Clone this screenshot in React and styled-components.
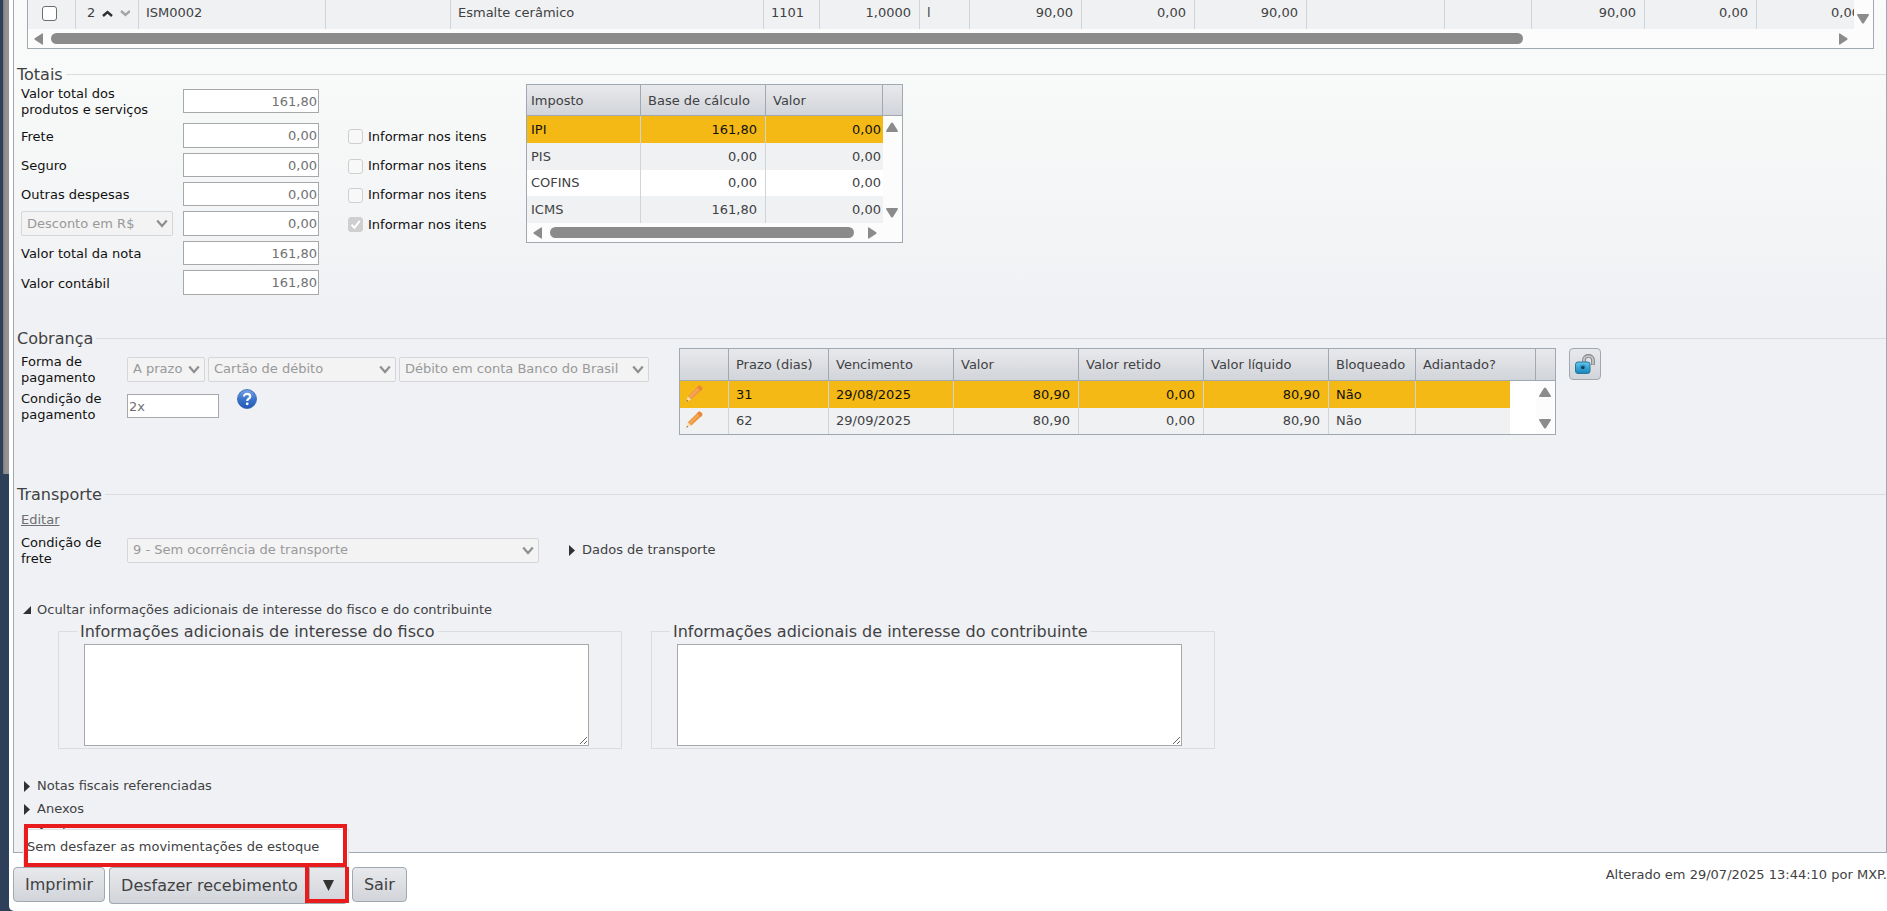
import React from "react";
import styled, { createGlobalStyle, css } from "styled-components";

const GlobalStyle = createGlobalStyle`
  *, *::before, *::after { box-sizing: border-box; }
  body {
    margin: 0;
    background: #fff;
    color: #3f4143;
    font: 13px/16px Verdana, "DejaVu Sans", sans-serif;
  }
  input, select, textarea, button { font: inherit; color: inherit; }
`;

const line = "#a0a8b2";
const cellLine = "#d0d4d9";
const headerFill = "linear-gradient(#e8e9ec, #d1d4d9)";

const Page = styled.div`
  display: flex;
  min-height: 100vh;
  background: #2e4059;
`;

const Backdrop = styled.div`
  flex: none;
  width: 9px;
  padding-left: 3px;
`;

const BackdropShade = styled.div`
  height: 52vh;
  background: linear-gradient(90deg, #77797c, #929292 40%);
`;

const Dialog = styled.main`
  flex: 1;
  min-width: 0;
  padding-left: 4px;
  background: #fff;
  border-bottom-left-radius: 5px;
`;

const Panel = styled.div`
  border: solid ${line};
  border-width: 0 1px 1px;
  background: linear-gradient(#f9fbfa, #f8faf9 80px, #f0f1f4 310px);
`;

const GridFrame = styled.div`
  flex: none;
  width: ${(p) => (p.$width ? `${p.$width}px` : "auto")};
  margin: ${(p) => p.$margin || 0};
  border: 1px solid ${line};
  border-top-width: ${(p) => (p.$cut ? 0 : 1)}px;
  background: #fcfcfc;
`;

const GridBody = styled.div`
  display: flex;
`;

const GridViewport = styled.div`
  flex: 1;
  min-width: 0;
  overflow: hidden;
`;

const Table = styled.table`
  width: ${(p) => (p.$width ? `${p.$width}px` : "100%")};
  table-layout: fixed;
  border-collapse: separate;
  border-spacing: 0;
`;

const Th = styled.th`
  height: ${(p) => p.$height || 31}px;
  padding: 1px 0 0 ${(p) => p.$pad ?? 7}px;
  border: solid ${line};
  border-width: 0 1px 1px 0;
  background: ${headerFill};
  font-weight: 400;
  text-align: left;
  white-space: nowrap;
  &:last-child { border-right: 0; }
`;

const Td = styled.td`
  height: ${(p) => p.$height || 27}px;
  padding: 0 8px 0 ${(p) => p.$pad ?? 7}px;
  border-right: ${(p) => (p.$last ? "0" : `1px solid ${cellLine}`)};
  text-align: ${(p) => (p.$num ? "right" : "left")};
  white-space: nowrap;
  ${(p) => p.$tight && css`padding-right: 2px;`}
  ${(p) => p.$raised && css`padding-bottom: 3px;`}
`;

const Tr = styled.tr`
  background: ${(p) => (p.$selected ? "#f5b915" : p.$plain ? "#fff" : "#f0f1f3")};
  color: ${(p) => (p.$selected ? "#111" : "inherit")};
`;

const FillerCell = styled.td`
  padding: 0;
  background: #fff;
`;

const ScrollCell = styled.td`
  height: 1px;
  padding: 0;
  background: #fcfcfc;
`;

const VScroll = styled.div`
  display: flex;
  flex-direction: column;
  justify-content: ${(p) => (p.$end ? "flex-end" : "space-between")};
  align-items: center;
  width: 19px;
  height: ${(p) => (p.$end ? "auto" : "100%")};
  padding: 6px 1px 5px 0;
`;

const HScroll = styled.div`
  display: flex;
  align-items: center;
  gap: 8px;
  height: 19px;
  padding: 0 25px 0 6px;
`;

const Track = styled.div`
  flex: 1;
  height: 11px;
  padding-right: ${(p) => p.$rest};
`;

const Thumb = styled.div`
  height: 11px;
  border-radius: 6px;
  background: #8b8b8b;
`;

const OrderCell = styled.div`
  display: flex;
  align-items: center;
  gap: 7px;
  padding-left: 4px;
`;

const CheckBox = styled.input.attrs({ type: "checkbox" })`
  appearance: none;
  display: block;
  flex: none;
  width: 15px;
  height: 15px;
  margin: 0;
  border: 1px solid #6d6d6d;
  border-radius: 3px;
  background: #fff;
  &:disabled { border-color: #cfcfcf; background: #f8f8f8; }
  &:disabled:checked {
    border-color: #cfcfcf;
    background: #cfcfcf;
  }
`;

const CheckWrap = styled.span`
  display: grid;
  > * { grid-area: 1 / 1; }
`;

const CheckLabel = styled.label`
  display: flex;
  align-items: center;
  gap: 5px;
  margin-left: 29px;
  padding-top: 2px;
  color: #111;
`;

const Section = styled.fieldset`
  min-width: 0;
  margin: ${(p) => p.$top}px 0 0;
  padding: 0;
  border: 0;
  border-top: 1px solid #dadcde;
`;

const Legend = styled.legend`
  padding: 0 3px;
  font-size: 16px;
  line-height: 19px;
`;

const Columns = styled.div`
  display: flex;
  align-items: ${(p) => (p.$center ? "center" : "flex-start")};
`;

const Fields = styled.div`
  display: flex;
  flex-direction: column;
  flex: none;
  gap: ${(p) => p.$gap || 5}px;
  width: ${(p) => p.$width}px;
  padding: ${(p) => p.$top}px 0 0 7px;
`;

const FieldRow = styled.div`
  display: flex;
  align-items: center;
`;

const FieldLabel = styled.label`
  flex: none;
  width: ${(p) => p.$width}px;
  padding: 2px 20px 0 0;
  color: #111;
`;

const SelectSlot = styled.div`
  flex: none;
  width: 162px;
`;

const TextInput = styled.input`
  flex: none;
  width: ${(p) => p.$width}px;
  height: ${(p) => (p.$tall ? 25 : 24)}px;
  padding: 0 1px;
  border: 1px solid #a6a8aa;
  border-radius: 0;
  background: #fff;
  color: #6f7173;
  text-align: ${(p) => (p.$num ? "right" : "left")};
`;

const SelectBox = styled.span`
  display: grid;
  flex: none;
  align-items: center;
  width: ${(p) => p.$width}px;
  > * { grid-area: 1 / 1; }
  > svg { justify-self: end; margin-right: 5px; pointer-events: none; }
`;

const Select = styled.select`
  appearance: none;
  width: 100%;
  height: 25px;
  padding: 0 0 0 5px;
  border: 1px solid #d5d6d7;
  border-radius: 2px;
  background: #f3f3f3;
  color: #98999a;
  opacity: 1;
`;

const SelectGroup = styled.div`
  display: flex;
  gap: 3px;
`;

const HelpButton = styled.button`
  align-self: flex-start;
  width: 20px;
  height: 20px;
  margin-left: 18px;
  padding: 0;
  border: 0;
  background: none;
  svg { display: block; }
`;

const PencilButton = styled.button`
  display: block;
  padding: 0;
  border: 0;
  background: none;
  svg { display: block; }
`;

const IconButton = styled.button`
  display: grid;
  place-items: center;
  flex: none;
  width: 32px;
  height: 32px;
  margin-left: 13px;
  padding: 0;
  border: 1px solid ${line};
  border-radius: 4px;
  background: ${headerFill};
`;

const EditLink = styled.a`
  display: block;
  width: max-content;
  margin: 8px 0 5px 7px;
  color: #6c6e70;
  text-decoration: underline;
`;

const Toggle = styled.button`
  display: flex;
  align-items: center;
  gap: ${(p) => (p.$open ? 6 : 7)}px;
  margin: 0;
  padding: 0;
  border: 0;
  background: none;
  text-align: left;
`;

const Extras = styled.div`
  padding: 35px 0 0 9px;
`;

const Notes = styled.div`
  display: flex;
  gap: 29px;
  margin: 4px 0 0 35px;
`;

const NoteSet = styled.fieldset`
  width: 564px;
  min-width: 0;
  margin: 0;
  padding: 3px 0 2px 25px;
  border: 1px solid #dadcde;
  legend { margin-left: -7px; }
`;

const NoteArea = styled.textarea`
  display: block;
  width: 505px;
  height: 102px;
  padding: 2px;
  border: 1px solid #a6a8aa;
  background: #fff;
`;

const ToggleList = styled.div`
  display: flex;
  flex-direction: column;
  align-items: flex-start;
  gap: 7px;
  padding: 29px 0 12px 10px;
`;

const Footer = styled.footer`
  position: relative;
  display: flex;
  align-items: flex-start;
  gap: 4px;
  padding-top: 14px;
`;

const Button = styled.button`
  height: ${(p) => (p.$tall ? 37 : 35)}px;
  padding: 0 11px;
  border: 1px solid ${line};
  border-radius: 4px;
  background: ${headerFill};
  font-size: 16px;
`;

const SplitButton = styled.div`
  display: flex;
  ${Button}:first-child { border-radius: 4px 0 0 4px; border-right: 0; }
  ${Button}:last-child { border-radius: 0 4px 4px 0; }
`;

const ArrowButton = styled(Button)`
  position: relative;
  width: 39px;
  padding: 0;
  &::after {
    content: "";
    position: absolute;
    inset: -5px -2px 0 -5px;
    border: 4px solid #e81c1c;
  }
  svg { display: block; margin: 0 auto; }
`;

const Menu = styled.div`
  position: absolute;
  left: 10px;
  bottom: 100%;
  width: 326px;
  margin-bottom: -14px;
  border: 1px solid #e2e3e5;
  background: #fff;
  &::after {
    content: "";
    position: absolute;
    inset: -6px 1px -1px 0;
    border: 4px solid #e81c1c;
    pointer-events: none;
  }
`;

const MenuItem = styled.button`
  display: block;
  height: 36px;
  padding: 0 3px 2px;
  border: 0;
  background: none;
`;

const Changed = styled.p`
  margin: 0 0 0 auto;
`;

const arrows = {
  left: "M9 1v10q0 1-1 .5L.8 6.8Q0 6 .8 5.200L8 .5Q9 0 9 1Z",
  right: "M0 1v10q0 1 1 .5l7.200-4.700Q9 6 8.200 5.200L1 .5Q0 0 0 1Z",
  up: "M1 10h10q1.500 0 .7-1.500L7 1Q6 0 5 1L.3 8.500Q-.5 10 1 10Z",
  down: "M1 0h10q1.500 0 .7 1.500L7 9Q6 10 5 9L.3 1.500Q-.5 0 1 0Z",
};

function ScrollArrow({ dir }) {
  const across = dir === "left" || dir === "right";
  return (
    <svg width={across ? 9 : 12} height={across ? 12 : 10} fill="#8b8b8b" aria-hidden="true">
      <path d={arrows[dir]} />
    </svg>
  );
}

function HorizontalScroll({ rest }) {
  return (
    <HScroll>
      <ScrollArrow dir="left" />
      <Track $rest={rest}><Thumb /></Track>
      <ScrollArrow dir="right" />
    </HScroll>
  );
}

function Caret({ up }) {
  return (
    <svg width="11" height="7" fill="none" stroke={up ? "#2d2f31" : "#a3a5a7"} strokeWidth="2.4" aria-hidden="true">
      <path d={up ? "M1 6 5.500 2 10 6" : "M1 1 5.500 5 10 1"} />
    </svg>
  );
}

function Chevron() {
  return (
    <svg width="12" height="9" fill="none" stroke="#8d8f91" strokeWidth="2.200" aria-hidden="true">
      <path d="M1.200 1.500 6 7l4.800-5.500" />
    </svg>
  );
}

function ToggleMark({ open }) {
  return open ? (
    <svg width="8" height="8" fill="#2f3133" aria-hidden="true"><path d="M8 0v8H0Z" /></svg>
  ) : (
    <svg width="6" height="11" fill="#2f3133" aria-hidden="true"><path d="M0 0 6 5.500 0 11Z" /></svg>
  );
}

function HelpIcon() {
  return (
    <svg width="20" height="20" viewBox="0 0 20 20" aria-hidden="true">
      <defs>
        <linearGradient id="help" x1="0" y1="0" x2="0" y2="1">
          <stop offset="0" stopColor="#7ba6e4" />
          <stop offset=".5" stopColor="#3a74cc" />
          <stop offset="1" stopColor="#2258b4" />
        </linearGradient>
      </defs>
      <circle cx="10" cy="10" r="9.500" fill="url(#help)" stroke="#2f62b4" strokeWidth=".8" />
      <path d="M7 7.600C7 3.800 13.200 4 13.200 7.400c0 2.300-3 2.200-3 4.600" fill="none" stroke="#fff" strokeWidth="2.200" />
      <circle cx="10.200" cy="14.800" r="1.400" fill="#fff" />
    </svg>
  );
}

function PencilIcon() {
  return (
    <svg width="17" height="17" viewBox="0 0 17 17" aria-hidden="true">
      <path d="M1.800 11.200 5.400 14.600.4 16.600Z" fill="#f6dfb2" />
      <path d="M.4 16.600 1 14.900 2.200 16Z" fill="#4a4035" />
      <path d="M1.800 11.200 12 1.200q1.400-1.400 2.900 0l.8.8q1.400 1.400 0 2.900L5.400 14.600Z" fill="#ef9a42" />
      <path d="M3.400 12.600 13.600 2.600" stroke="#f5b062" strokeWidth="1.200" />
      <path d="M12 1.200q1.400-1.400 2.900 0l.8.8q1.400 1.400 0 2.900l-1 1-3.700-3.700Z" fill="#e8893a" />
    </svg>
  );
}

function UnlockIcon() {
  return (
    <svg width="20" height="20" viewBox="0 0 20 20" aria-hidden="true">
      <defs>
        <linearGradient id="lock" x1="0" y1="0" x2="0" y2="1">
          <stop offset="0" stopColor="#68c6ec" />
          <stop offset="1" stopColor="#1583b8" />
        </linearGradient>
      </defs>
      <path d="M9 9V6C9 .6 18 .6 18 6V11" fill="none" stroke="#858789" strokeWidth="3.800" />
      <path d="M9 9V6C9 .8 18 .8 18 6V10.500" fill="none" stroke="#c3c5c7" strokeWidth="1.800" />
      <rect x=".5" y="8" width="14.500" height="11.500" rx="2.500" fill="url(#lock)" stroke="#2478a0" />
      <circle cx="7.800" cy="13.600" r="3.200" fill="#2c98cc" />
      <circle cx="7.800" cy="13.600" r="1.700" fill="#0f3d5a" />
    </svg>
  );
}

function Picker({ id, label, width, value }) {
  return (
    <SelectBox $width={width}>
      <Select id={id} aria-label={label} disabled defaultValue={value}>
        <option>{value}</option>
      </Select>
      <Chevron />
    </SelectBox>
  );
}

function InItems({ checked, name }) {
  return (
    <CheckLabel>
      <CheckWrap>
        <CheckBox name={name} disabled defaultChecked={checked} />
        {checked && (
          <svg width="15" height="15" fill="none" stroke="#fff" strokeWidth="2" aria-hidden="true">
            <path d="m3.500 7.800 3 3 5.200-7" />
          </svg>
        )}
      </CheckWrap>
      Informar nos itens
    </CheckLabel>
  );
}

const itemColumns = [48, 63, 187, 125, 313, 56, 100, 50, 112, 113, 112, 138, 87, 113, 112, 112];
const itemCells = [
  ["ISM0002"], [""], ["Esmalte cerâmico"], ["1101"], ["1,0000", true], ["l"], ["90,00", true], ["0,00", true],
  ["90,00", true], [""], [""], ["90,00", true], ["0,00", true], ["0,00", true],
];

const totals = [
  { id: "produtos", label: "Valor total dos produtos e serviços", value: "161,80" },
  { id: "frete", label: "Frete", value: "0,00", items: true, tall: true },
  { id: "seguro", label: "Seguro", value: "0,00", items: true },
  { id: "outras", label: "Outras despesas", value: "0,00", items: true },
  { id: "desconto", select: "Desconto em R$", value: "0,00", items: true, checked: true, tall: true },
  { id: "nota", label: "Valor total da nota", value: "161,80" },
  { id: "contabil", label: "Valor contábil", value: "161,80", tall: true },
];

const taxes = [
  ["IPI", "161,80", "0,00"],
  ["PIS", "0,00", "0,00"],
  ["COFINS", "0,00", "0,00"],
  ["ICMS", "161,80", "0,00"],
];

const installments = [
  ["31", "29/08/2025", "80,90", "0,00", "80,90", "Não"],
  ["62", "29/09/2025", "80,90", "0,00", "80,90", "Não"],
];

function Cols({ widths }) {
  return <colgroup>{widths.map((w, i) => <col key={i} width={w} />)}</colgroup>;
}

function ItemsGrid() {
  return (
    <GridFrame $cut $margin="0 12px 0 13px">
      <GridBody>
        <GridViewport>
          <Table $width={1841}>
            <Cols widths={itemColumns} />
            <tbody>
              <Tr>
                <Td $height={29} $pad={14} $raised><CheckBox aria-label="Selecionar item 2" /></Td>
                <Td $height={29} $raised>
                  <OrderCell>2 <Caret up /><Caret /></OrderCell>
                </Td>
                {itemCells.map(([text, num], i) => (
                  <Td key={i} $height={29} $num={num} $raised>{text}</Td>
                ))}
              </Tr>
            </tbody>
          </Table>
        </GridViewport>
        <VScroll $end><ScrollArrow dir="down" /></VScroll>
      </GridBody>
      <HorizontalScroll rest="17%" />
    </GridFrame>
  );
}

function TaxGrid() {
  return (
    <GridFrame $width={377}>
      <Table>
        <Cols widths={[114, 125, 117, 19]} />
        <thead>
          <tr><Th $pad={4}>Imposto</Th><Th>Base de cálculo</Th><Th>Valor</Th><Th /></tr>
        </thead>
        <tbody>
          {taxes.map(([name, base, value], i) => (
            <Tr key={name} $selected={i === 0} $plain={i === 2}>
              <Td $height={i === 2 ? 26 : 27} $pad={4}>{name}</Td>
              <Td $height={i === 2 ? 26 : 27} $num>{base}</Td>
              <Td $height={i === 2 ? 26 : 27} $num $tight $last>{value}</Td>
              {i === 0 && (
                <ScrollCell rowSpan={4}>
                  <VScroll><ScrollArrow dir="up" /><ScrollArrow dir="down" /></VScroll>
                </ScrollCell>
              )}
            </Tr>
          ))}
        </tbody>
      </Table>
      <HorizontalScroll rest="6px" />
    </GridFrame>
  );
}

function InstallmentGrid() {
  return (
    <GridFrame $width={877}>
      <Table>
        <Cols widths={[49, 100, 125, 125, 125, 125, 87, 94, 26, 19]} />
        <thead>
          <tr>
            <Th $height={32} />
            {["Prazo (dias)", "Vencimento", "Valor", "Valor retido", "Valor líquido", "Bloqueado"].map((t) => (
              <Th key={t} $height={32}>{t}</Th>
            ))}
            <Th $height={32} colSpan={2}>Adiantado?</Th>
            <Th $height={32} />
          </tr>
        </thead>
        <tbody>
          {installments.map((row, i) => (
            <Tr key={row[0]} $selected={i === 0}>
              <Td $height={i === 0 ? 27 : 26} $pad={6} $raised>
                <PencilButton aria-label={`Editar parcela ${i + 1}`}><PencilIcon /></PencilButton>
              </Td>
              {row.map((text, j) => (
                <Td key={j} $height={i === 0 ? 27 : 26} $num={j > 1 && j < 5}>{text}</Td>
              ))}
              <Td $height={i === 0 ? 27 : 26} $last />
              {i === 0 && <FillerCell rowSpan={2} />}
              {i === 0 && (
                <ScrollCell rowSpan={2}>
                  <VScroll><ScrollArrow dir="up" /><ScrollArrow dir="down" /></VScroll>
                </ScrollCell>
              )}
            </Tr>
          ))}
        </tbody>
      </Table>
    </GridFrame>
  );
}

export default function App() {
  return (
    <Page>
      <GlobalStyle />
      <Backdrop><BackdropShade /></Backdrop>
      <Dialog>
        <Panel>
          <ItemsGrid />

          <Section $top={16}>
            <Legend>Totais</Legend>
            <Columns>
              <Fields $width={512} $top={0}>
                {totals.map((t) => (
                  <FieldRow key={t.id}>
                    {t.select ? (
                      <SelectSlot><Picker label="Tipo de desconto" width={152} value={t.select} /></SelectSlot>
                    ) : (
                      <FieldLabel htmlFor={t.id} $width={162}>{t.label}</FieldLabel>
                    )}
                    <TextInput
                      id={t.id}
                      aria-label={t.select}
                      $width={136}
                      $tall={t.tall}
                      $num
                      readOnly
                      value={t.value}
                    />
                    {t.items && <InItems name={`${t.id}-itens`} checked={t.checked} />}
                  </FieldRow>
                ))}
              </Fields>
              <TaxGrid />
            </Columns>
          </Section>

          <Section $top={34}>
            <Legend>Cobrança</Legend>
            <Columns>
              <Fields $width={665} $top={4} $gap={3}>
                <FieldRow>
                  <FieldLabel htmlFor="forma" $width={106}>Forma de pagamento</FieldLabel>
                  <SelectGroup>
                    <Picker id="forma" width={78} value="A prazo" />
                    <Picker label="Meio de pagamento" width={188} value="Cartão de débito" />
                    <Picker label="Conta" width={250} value="Débito em conta Banco do Brasil" />
                  </SelectGroup>
                </FieldRow>
                <FieldRow>
                  <FieldLabel htmlFor="condicao" $width={106}>Condição de pagamento</FieldLabel>
                  <TextInput id="condicao" $width={92} readOnly value="2x" />
                  <HelpButton aria-label="Ajuda"><HelpIcon /></HelpButton>
                </FieldRow>
              </Fields>
              <InstallmentGrid />
              <IconButton aria-label="Desbloquear"><UnlockIcon /></IconButton>
            </Columns>
          </Section>

          <Section $top={50}>
            <Legend>Transporte</Legend>
            <EditLink href="#transporte">Editar</EditLink>
            <Columns $center>
              <Fields $width={555} $top={0}>
                <FieldRow>
                  <FieldLabel htmlFor="condfrete" $width={106}>Condição de frete</FieldLabel>
                  <Picker id="condfrete" width={412} value="9 - Sem ocorrência de transporte" />
                </FieldRow>
              </Fields>
              <Toggle><ToggleMark />Dados de transporte</Toggle>
            </Columns>
          </Section>

          <Extras>
            <Toggle $open><ToggleMark open />Ocultar informações adicionais de interesse do fisco e do contribuinte</Toggle>
            <Notes>
              <NoteSet>
                <Legend>Informações adicionais de interesse do fisco</Legend>
                <NoteArea aria-label="Informações adicionais de interesse do fisco" />
              </NoteSet>
              <NoteSet>
                <Legend>Informações adicionais de interesse do contribuinte</Legend>
                <NoteArea aria-label="Informações adicionais de interesse do contribuinte" />
              </NoteSet>
            </Notes>
          </Extras>

          <ToggleList>
            <Toggle><ToggleMark />Notas fiscais referenciadas</Toggle>
            <Toggle><ToggleMark />Anexos</Toggle>
            <Toggle><ToggleMark />Anotações</Toggle>
          </ToggleList>
        </Panel>

        <Footer>
          <Button>Imprimir</Button>
          <SplitButton>
            <Button $tall>Desfazer recebimento</Button>
            <ArrowButton $tall aria-label="Mais opções">
              <svg width="11" height="11" fill="#333" aria-hidden="true"><path d="M0 0h11L5.500 11Z" /></svg>
            </ArrowButton>
          </SplitButton>
          <Button>Sair</Button>
          <Changed>Alterado em 29/07/2025 13:44:10 por MXP.</Changed>
          <Menu><MenuItem>Sem desfazer as movimentações de estoque</MenuItem></Menu>
        </Footer>
      </Dialog>
    </Page>
  );
}
